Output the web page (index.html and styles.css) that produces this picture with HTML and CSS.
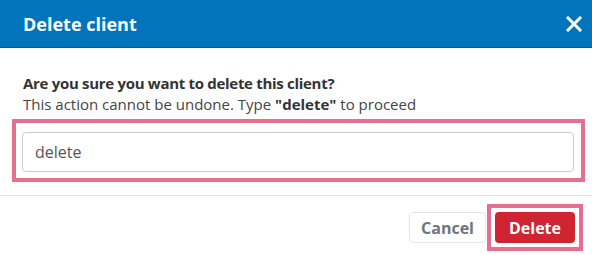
FILE: index.html
```html
<!DOCTYPE html>
<html lang="en">
<head>
  <meta charset="UTF-8">
  <title>Delete client</title>
  <link rel="stylesheet" href="styles.css">
</head>
<body>
  <div class="modal">
    <div class="modal-header">
      <h2 class="modal-title">Delete client</h2>
      <button class="close-btn" aria-label="Close">
        <svg width="16" height="16" viewBox="0 0 16 16">
          <path d="M2 2 L14 14 M14 2 L2 14" stroke="#fff" stroke-width="3" stroke-linecap="square"/>
        </svg>
      </button>
    </div>
    <div class="modal-body">
      <p class="question">Are you sure you want to delete this client?</p>
      <p class="hint">This action cannot be undone. Type <b>"delete"</b> to proceed</p>
      <div class="highlight input-wrap">
        <input type="text" class="confirm-input" value="delete">
      </div>
    </div>
    <div class="modal-footer">
      <button class="btn btn-cancel">Cancel</button>
      <div class="highlight btn-wrap">
        <button class="btn btn-delete">Delete</button>
      </div>
    </div>
  </div>
</body>
</html>
```

FILE: styles.css
```css
body {
  margin: 0;
  background: #fff;
  font-family: 'Open Sans', 'Liberation Sans', sans-serif;
  color: #333;
}
.modal {
  width: 592px;
  height: 255px;
  background: #fff;
}
.modal-header {
  height: 47px;
  background-color: #0174bc;
  border-bottom: 1px solid #005c96;
  display: flex;
  align-items: center;
  justify-content: space-between;
  padding: 0 10px 0 23px;
}
.modal-title {
  margin: 0;
  color: #fff;
  font-size: 18px;
  font-weight: 700;
}
.close-btn {
  background: none;
  border: none;
  padding: 0;
  width: 16px;
  height: 16px;
  cursor: pointer;
}
.close-btn svg {
  display: block;
}
.modal-body {
  padding: 25px 18px 0 23px;
}
.question {
  margin: 0;
  font-size: 15px;
  font-weight: 700;
  line-height: 21px;
  letter-spacing: -0.3px;
}
.hint {
  margin: 0;
  font-size: 15px;
  line-height: 21px;
  color: #444;
}
.hint b {
  color: #333;
}
.highlight {
  border: 4px solid #e56f8d;
}
.input-wrap {
  margin: 4px -11px 0 -11px;
  padding: 9px 7px 6px 6px;
}
.confirm-input {
  display: block;
  width: 100%;
  height: 40px;
  box-sizing: border-box;
  border: 1px solid #ccc;
  border-radius: 4px;
  padding: 0 12px;
  font-family: 'Open Sans', 'Liberation Sans', sans-serif;
  font-size: 16px;
  color: #555;
}
.modal-footer {
  margin-top: 13px;
  border-top: 1px solid #e5e5e5;
  padding: 8px 9px 0 0;
  display: flex;
  justify-content: flex-end;
  align-items: center;
}
.btn {
  height: 31px;
  border-radius: 4px;
  font-family: 'Open Sans', 'Liberation Sans', sans-serif;
  font-size: 16px;
  font-weight: 700;
  cursor: pointer;
}
.btn-cancel {
  width: 77px;
  background: #fff;
  border: 1px solid #e5e5e5;
  color: #6c7680;
  margin-right: 1px;
}
.btn-wrap {
  padding: 4px;
}
.btn-delete {
  display: block;
  width: 80px;
  background-color: #cf2532;
  border: none;
  color: #fff;
}
```
